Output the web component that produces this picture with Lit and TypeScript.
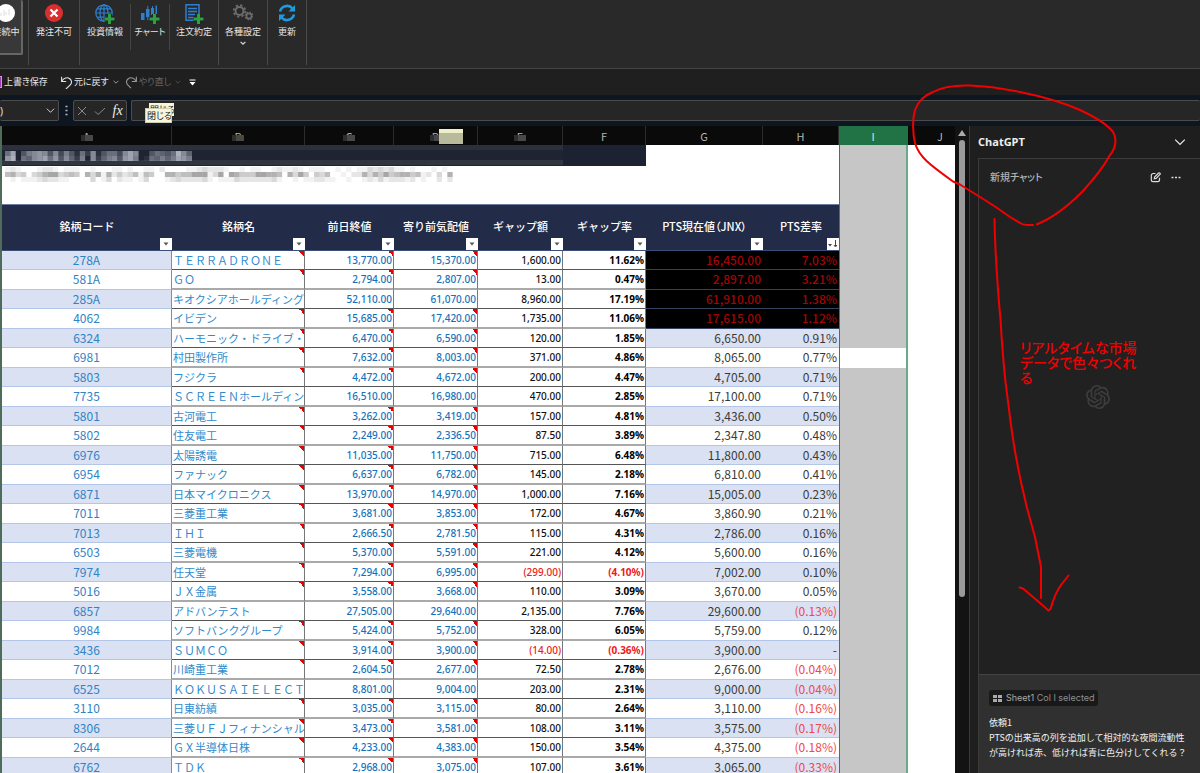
import { LitElement, html, css, svg, nothing } from "lit";
import { customElement } from "lit/decorators.js";
import { classMap } from "lit/directives/class-map.js";

type Row = [string, string, string, string, string, string, string, string];

const ROWS: Row[] = [
  ["278A", "ＴＥＲＲＡＤＲＯＮＥ", "13,770.00", "15,370.00", "1,600.00", "11.62%", "16,450.00", "7.03%"],
  ["581A", "ＧＯ", "2,794.00", "2,807.00", "13.00", "0.47%", "2,897.00", "3.21%"],
  ["285A", "キオクシアホールディング", "52,110.00", "61,070.00", "8,960.00", "17.19%", "61,910.00", "1.38%"],
  ["4062", "イビデン", "15,685.00", "17,420.00", "1,735.00", "11.06%", "17,615.00", "1.12%"],
  ["6324", "ハーモニック・ドライブ・", "6,470.00", "6,590.00", "120.00", "1.85%", "6,650.00", "0.91%"],
  ["6981", "村田製作所", "7,632.00", "8,003.00", "371.00", "4.86%", "8,065.00", "0.77%"],
  ["5803", "フジクラ", "4,472.00", "4,672.00", "200.00", "4.47%", "4,705.00", "0.71%"],
  ["7735", "ＳＣＲＥＥＮホールディン", "16,510.00", "16,980.00", "470.00", "2.85%", "17,100.00", "0.71%"],
  ["5801", "古河電工", "3,262.00", "3,419.00", "157.00", "4.81%", "3,436.00", "0.50%"],
  ["5802", "住友電工", "2,249.00", "2,336.50", "87.50", "3.89%", "2,347.80", "0.48%"],
  ["6976", "太陽誘電", "11,035.00", "11,750.00", "715.00", "6.48%", "11,800.00", "0.43%"],
  ["6954", "ファナック", "6,637.00", "6,782.00", "145.00", "2.18%", "6,810.00", "0.41%"],
  ["6871", "日本マイクロニクス", "13,970.00", "14,970.00", "1,000.00", "7.16%", "15,005.00", "0.23%"],
  ["7011", "三菱重工業", "3,681.00", "3,853.00", "172.00", "4.67%", "3,860.90", "0.21%"],
  ["7013", "ＩＨＩ", "2,666.50", "2,781.50", "115.00", "4.31%", "2,786.00", "0.16%"],
  ["6503", "三菱電機", "5,370.00", "5,591.00", "221.00", "4.12%", "5,600.00", "0.16%"],
  ["7974", "任天堂", "7,294.00", "6,995.00", "(299.00)", "(4.10%)", "7,002.00", "0.10%"],
  ["5016", "ＪＸ金属", "3,558.00", "3,668.00", "110.00", "3.09%", "3,670.00", "0.05%"],
  ["6857", "アドバンテスト", "27,505.00", "29,640.00", "2,135.00", "7.76%", "29,600.00", "(0.13%)"],
  ["9984", "ソフトバンクグループ", "5,424.00", "5,752.00", "328.00", "6.05%", "5,759.00", "0.12%"],
  ["3436", "ＳＵＭＣＯ", "3,914.00", "3,900.00", "(14.00)", "(0.36%)", "3,900.00", "-"],
  ["7012", "川崎重工業", "2,604.50", "2,677.00", "72.50", "2.78%", "2,676.00", "(0.04%)"],
  ["6525", "ＫＯＫＵＳＡＩＥＬＥＣＴ", "8,801.00", "9,004.00", "203.00", "2.31%", "9,000.00", "(0.04%)"],
  ["3110", "日東紡績", "3,035.00", "3,115.00", "80.00", "2.64%", "3,110.00", "(0.16%)"],
  ["8306", "三菱ＵＦＪフィナンシャル", "3,473.00", "3,581.00", "108.00", "3.11%", "3,575.00", "(0.17%)"],
  ["2644", "ＧＸ半導体日株", "4,233.00", "4,383.00", "150.00", "3.54%", "4,375.00", "(0.18%)"],
  ["6762", "ＴＤＫ", "2,968.00", "3,075.00", "107.00", "3.61%", "3,065.00", "(0.33%)"],
];

const HEADS = ["銘柄コード", "銘柄名", "前日終値", "寄り前気配値", "ギャップ額", "ギャップ率", "PTS現在値（JNX）", "PTS差率"];
const LETTERS = ["A", "B", "C", "D", "E", "F", "G", "H", "I", "J"];
const WITHOUT_NOTE = new Set(["285A", "7735", "6857", "6525"]);

/** Mosaic strips: one hex digit of strength per 16-unit block, one string per line. */
const TITLE_MOSAIC = ["6a047898483741628146638a80046546b85", "9b06589a694852708257849a70165757a97"];
const SUB_MOSAIC = [
  "1210001221011100100011010011020000112322210010110012112101110010101132323110100010100",
  "5634034677345406361624235154006645577713707644477665063740435001022636474566451203060",
  "0101112322110000301302110130001232222310111322222231001011221100100121312221201002020",
];

const mosaic = (lines: string[], fill: string, height: number, strength: number) => svg`
  <svg class="mosaic" width=${Math.round((lines[0].length * 16) / 3)} height=${lines.length * height}
    viewBox="0 0 ${lines[0].length * 16} ${lines.length * height}" preserveAspectRatio="none" aria-hidden="true">
    ${lines.map((line, y) => [...line].map((d, x) => svg`<rect x=${x * 16} y=${y * height} width="16" height=${height}
      fill=${fill} fill-opacity=${parseInt(d, 16) * strength}></rect>`))}
  </svg>`;

const plus = svg`<path d="M14.500 10v10M9.500 15h10" stroke="#1f1f1f" stroke-width="5"/><path d="M14.500 10v10M9.500 15h10" stroke="#2ea043" stroke-width="3.200"/>`;

const ICONS = {
  link: svg`<circle cx="10" cy="9" r="9" fill="#fff"/><path d="M5 9v3M8 6v6M10 8v3M13 5v6" stroke="#ddd"/>`,
  stop: svg`<circle cx="10" cy="9" r="9" fill="#d9302f"/><path d="M6.500 5.500l7 7M13.500 5.500l-7 7" stroke="#fff" stroke-width="2.200"/>`,
  globe: svg`<g fill="none" stroke="#2f7fd0" stroke-width="1.200"><circle cx="9" cy="9" r="8.200"/><ellipse cx="9" cy="9" rx="4" ry="8.200"/><path d="M.8 9h16.400M9 .8v16.400M2.200 4.800h13.600M2.200 13.200h13.600"/></g>${plus}`,
  chart: svg`<g fill="#2f7fd0"><rect x="1" y="9" width="3.500" height="7"/><path d="M6 5h3.500v8H6zM7.300 2h1v14h-1zM11 4h3v7h-3z"/><path d="M12 2h1v12h-1zM15.500 1.500H17v9h-1.500z"/></g>${plus}`,
  order: svg`<path d="M2 .8h13v15.500H2z" fill="none" stroke="#2f7fd0" stroke-width="1.500"/><path d="M4 4.500h9M4 7.500h9M4 10.500h7M4 13.500h6" stroke="#2f7fd0" stroke-width="1.500"/>${plus}`,
  gears: svg`<g fill="none" stroke="#6c6c6c"><circle cx="6.500" cy="7" r="4" stroke-width="2"/><circle cx="6.500" cy="7" r="5.800" stroke-width="1.800" stroke-dasharray="2.280 2.280"/><circle cx="16" cy="12" r="2.600" stroke-width="1.600"/><circle cx="16" cy="12" r="3.900" stroke-width="1.200" stroke-dasharray="1.530 1.530"/></g>`,
  refresh: svg`<g fill="none" stroke="#1e9be0" stroke-width="2.600"><path d="M3 7.500a7.200 7.200 0 0 1 12.500-3"/><path d="M17 10.500a7.200 7.200 0 0 1-12.500 3"/></g><path d="M18 1v6.500h-6.500zM2 17v-6.500h6.500z" fill="#1e9be0"/>`,
};

const OPENAI =
  "M22.2819 9.8211a5.9847 5.9847 0 0 0-.5157-4.9108 6.0462 6.0462 0 0 0-6.5098-2.9A6.0651 6.0651 0 0 0 4.9807 4.1818a5.9847 5.9847 0 0 0-3.9977 2.9 6.0462 6.0462 0 0 0 .7427 7.0966 5.98 5.98 0 0 0 .511 4.9107 6.051 6.051 0 0 0 6.5146 2.9001A5.9847 5.9847 0 0 0 13.2599 24a6.0557 6.0557 0 0 0 5.7718-4.2058 5.9894 5.9894 0 0 0 3.9977-2.9001 6.0557 6.0557 0 0 0-.7475-7.0729zm-9.022 12.6081a4.4755 4.4755 0 0 1-2.8764-1.0408l.1419-.0804 4.7783-2.7582a.7948.7948 0 0 0 .3927-.6813v-6.7369l2.02 1.1686a.071.071 0 0 1 .038.052v5.5826a4.504 4.504 0 0 1-4.4945 4.4944zm-9.6607-4.1254a4.4708 4.4708 0 0 1-.5346-3.0137l.142.0852 4.783 2.7582a.7712.7712 0 0 0 .7806 0l5.8428-3.3685v2.3324a.0804.0804 0 0 1-.0332.0615L9.74 19.9502a4.4992 4.4992 0 0 1-6.1408-1.6464zM2.3408 7.8956a4.485 4.485 0 0 1 2.3655-1.9728V11.6a.7664.7664 0 0 0 .3879.6765l5.8144 3.3543-2.0201 1.1685a.0757.0757 0 0 1-.071 0l-4.8303-2.7865A4.504 4.504 0 0 1 2.3408 7.872zm16.5963 3.8558L13.1038 8.364 15.1192 7.2a.0757.0757 0 0 1 .071 0l4.8303 2.7913a4.4944 4.4944 0 0 1-.6765 8.1042v-5.6772a.79.79 0 0 0-.407-.667zm2.0107-3.0231l-.142-.0852-4.7735-2.7818a.7759.7759 0 0 0-.7854 0L9.409 9.2297V6.8974a.0662.0662 0 0 1 .0284-.0615l4.8303-2.7866a4.4992 4.4992 0 0 1 6.6802 4.66zM8.3065 12.863l-2.02-1.1638a.0804.0804 0 0 1-.038-.0567V6.0742a4.4992 4.4992 0 0 1 7.3757-3.4537l-.142.0805L8.704 5.459a.7948.7948 0 0 0-.3927.6813zm1.0976-2.3654l2.602-1.4998 2.6069 1.4998v2.9994l-2.5974 1.4997-2.6067-1.4997Z";

const chevron = (size: number) => html`<svg class="line" width=${size} height=${size} viewBox="0 0 10 10" aria-hidden="true"><path d="M1 3l4 4 4-4"/></svg>`;

@customElement("ribbon-bar")
class RibbonBar extends LitElement {
  static styles = css`
    :host { display: block; background: #292929; color: #e6e6e6; border-bottom: 1px solid #444; }
    .groups { display: flex; height: 68px; overflow: hidden; }
    .group { display: flex; height: 65px; box-sizing: border-box; border-right: 1px solid #4a4a4a; }
    .tool {
      display: flex; flex-direction: column; align-items: center; gap: 2px; box-sizing: border-box;
      width: 50px; height: 55px; padding: 4px 0 0; border: 0; background: none; color: inherit;
      font: 9px/12px "Noto Sans CJK JP", sans-serif; font-feature-settings: "palt"; white-space: nowrap;
    }
    .narrow { width: 38px; }
    .mid { width: 48px; }
    .on { width: 32px; margin: 0 5px 0 -9px; border: 2px solid #666; border-top: 0; border-left: 0; background: #383838; border-radius: 2px; align-items: center; }
    .split { width: 1px; height: 46px; margin-top: 4px; background: #444; }
    .line { fill: none; stroke: #ddd; stroke-width: 2; }
  `;
  private tool(icon: keyof typeof ICONS, label: string, cls = "", menu = false) {
    return html`<button class="tool ${cls}" type="button">
      <svg width="20" height="20" viewBox="0 0 20 20" aria-hidden="true">${ICONS[icon]}</svg>
      <span>${label}</span>${menu ? chevron(6) : nothing}
    </button>`;
  }
  render() {
    return html`<div class="groups">
      <div class="group">${this.tool("link", "接続中", "on")}</div>
      <div class="group">${this.tool("stop", "発注不可")}</div>
      <div class="group">
        ${this.tool("globe", "投資情報")}<span class="split"></span>
        ${this.tool("chart", "チャート", "narrow")}<span class="split"></span>
        ${this.tool("order", "注文約定", "mid")}
      </div>
      <div class="group">${this.tool("gears", "各種設定", "mid", true)}</div>
      <div class="group">${this.tool("refresh", "更新", "narrow")}</div>
    </div>`;
  }
}

@customElement("command-rows")
class CommandRows extends LitElement {
  static styles = css`
    :host { display: block; font: 9px/12px "Noto Sans CJK JP", sans-serif; color: #e6e6e6; }
    button { display: flex; align-items: center; gap: 2px; padding: 0; border: 0; background: none; color: inherit; font: inherit; font-feature-settings: "palt"; }
    .line { fill: none; stroke: currentColor; stroke-width: 1; }
    .quick { display: flex; align-items: center; height: 26px; background: #1f1f1f; }
    .disk { width: 1px; height: 10px; border: 1px solid #e08be6; border-left: 0; background: #a33bb0; }
    .undo { margin-left: 12px; gap: 1px; }
    .menu { margin-left: 4px; }
    .redo { margin-left: 6px; gap: 1px; }
    .off { color: #666; }
    .more { margin-left: 8px; }
    .formula { display: flex; align-items: center; gap: 4px; padding: 5px 0; background: #0e1721; }
    .box { display: flex; align-items: center; box-sizing: border-box; height: 21px; border: 1px solid #4c4c4c; border-radius: 2px; background: #262626; }
    .name { width: 59px; border-left: 0; padding-right: 3px; }
    .field { min-width: 0; flex: 1; border: 0; padding: 0; outline: 0; background: none; color: inherit; font: 10px "Noto Sans", sans-serif; }
    .dots { width: 6px; display: grid; justify-content: center; color: #aaa; }
    .fx { width: 54px; justify-content: space-around; color: #8a8a8a; }
    .fxlabel { font: italic 14px/16px "Liberation Serif", serif; color: #eee; }
    .entry { position: relative; flex: 1; border-right: 0; padding-left: 4px; }
    .tip { position: absolute; box-sizing: border-box; width: 25px; height: 13px; padding-left: 1px; background: #f7f5dc; color: #222; font-size: 9px; line-height: 13px; font-feature-settings: "palt"; white-space: nowrap; }
    .back { left: 17px; top: 2px; }
    .front { left: 14px; top: 8px; outline: 1px solid #cfcdb4; }
  `;
  render() {
    return html`
      <div class="quick">
        <button type="button"><span class="disk"></span><span>上書き保存</span></button>
        <button type="button" class="undo">
          <svg class="line" width="13" height="13" viewBox="0 0 12 12" aria-hidden="true"><path d="M1.500 .8v4.200h4.200M1.500 5C3.500 1.500 7 .9 9 2.500s2.200 3.900.5 5.600L5.500 12"/></svg>
          <span>元に戻す</span>
        </button>
        <button type="button" class="menu" aria-label="元に戻すの一覧">${chevron(6)}</button>
        <button type="button" class="redo off" disabled>
          <svg class="line" width="13" height="13" viewBox="0 0 12 12" aria-hidden="true"><path stroke="#999" d="M10.500 .8v4.200H6.300M10.500 5C8.500 1.500 5 .9 3 2.500s-2.200 3.900-.5 5.600l3 3"/></svg>
          <span>やり直し</span>
        </button>
        <button type="button" class="menu off" aria-label="やり直しの一覧">${chevron(6)}</button>
        <button type="button" class="more" aria-label="カスタマイズ">
          <svg width="7" height="7" viewBox="0 0 7 7" aria-hidden="true"><path d="M.5 1h6" stroke="#fff"/><path d="M.5 3h6L3.500 6.500z" fill="#fff"/></svg>
        </button>
      </div>
      <div class="formula">
        <div class="box name"><input class="field" aria-label="名前ボックス" .value=${")"} />${chevron(9)}</div>
        <div class="dots"><svg width="3" height="11" viewBox="0 0 3 11" aria-hidden="true"><path d="M.5 1.500h2M.5 5.500h2M.5 9.500h2" stroke="#bbb" stroke-width="1.500"/></svg></div>
        <div class="box fx">
          <svg class="line" width="10" height="10" viewBox="0 0 10 10" aria-hidden="true"><path d="M1 1l8 8M9 1l-8 8"/></svg>
          <svg class="line" width="12" height="10" viewBox="0 0 12 10" aria-hidden="true"><path d="M1 5.500l3 3L11 2"/></svg>
          <span class="fxlabel">fx</span>
        </div>
        <div class="box entry">
          <input class="field" aria-label="数式バー" />
          <span class="tip back">閉じる</span><span class="tip front">閉じる</span>
        </div>
      </div>`;
  }
}

@customElement("sheet-grid")
class SheetGrid extends LitElement {
  static styles = css`
    :host { display: block; box-sizing: border-box; overflow: hidden; background: #fff; border-left: 2px solid #4f6b5a; font-family: "Noto Sans CJK JP", sans-serif; }
    table { width: calc(100% + 18px); table-layout: fixed; border-collapse: separate; border-spacing: 0; }
    th, td { padding: 0; overflow: hidden; white-space: nowrap; box-sizing: border-box; }
    .ca { width: 170px; } .cb { width: 133px; } .cc { width: 89px; } .cd { width: 84px; } .ce { width: 85px; }
    .cf { width: 83px; } .cg { width: 117px; } .ch { width: 76px; } .ci { width: 69px; }
    .letter { position: relative; height: 19px; background: #0a0a0a; color: #b4b4b4; border-right: 1px solid #2c2c2c; font-size: 11px; font-weight: 400; line-height: 18px; }
    .masked::after { content: ""; position: absolute; left: calc(50% - 6px); bottom: 4px; width: 12px; height: 6px; background: linear-gradient(90deg, #2e2e2e 4px, #484848 4px); }
    .remnant::before { content: ""; position: absolute; z-index: 1; left: 45px; top: 3px; width: 24px; height: 15px; background: linear-gradient(#efeecb 4px, #b9b99c 4px); }
    .letter.sel { background: #217346; color: #d5e8dc; border-right-color: #217346; }
    .title { height: 21px; background: linear-gradient(#2b303c 5px, #1e2432 5px 15px, #30353f 15px 20px, #1c2238 20px) left / calc(100% - 83px) 100% no-repeat #1c2231; }
    .title .mosaic { display: block; margin-left: 3px; height: 10px; }
    .sub { height: 38px; vertical-align: top; }
    .sub .mosaic { display: block; margin: 1px 0 0 3px; height: 15px; }
    .head { height: 47px; background: #222b47; color: #fff; border-top: 1px solid #6c7ba0; border-bottom: 1px solid #3c4d78; font-size: 11px; font-weight: 500; }
    .cell { display: grid; height: 45px; }
    .cell > * { grid-area: 1 / 1; }
    .cell span { place-self: start center; line-height: 42px; }
    .snug { font-feature-settings: "palt"; }
    .filter { place-self: end; width: 12px; height: 12px; padding: 0; border: 0; background: #fff; display: grid; place-content: center; }
    .odd { height: 19px; }
    .even { height: 20px; }
    .odd td, .even td { line-height: 18px; vertical-align: top; }
    .code, .pts { font-size: 12px; border-bottom: 1px solid #b4c6e7; }
    .code { color: #2f83c6; text-align: center; border-right: 1px solid #8c8c8c; }
    .odd .code, .odd .pts { background: #d9e1f2; }
    .name { color: #2f8acb; font-size: 11px; font-weight: 400; padding-left: 1px; }
    .num { font-family: "Noto Sans", "Noto Sans CJK JP", sans-serif; font-size: 10px; text-align: right; padding-right: 1px; color: #111; font-weight: 500; }
    .price { color: #1272bd; }
    .rate { font-weight: 700; color: #000; }
    .name, .num { border-right: 1px solid #777; border-bottom: 1px solid #555; }
    .even .name, .even .num { border-bottom: 2px solid #a9a9a9; }
    .noted { background: linear-gradient(to bottom left, #e60000 50%, transparent 50%) right top / 5px 5px no-repeat; }
    .num.neg { color: #f01818; }
    .pts { text-align: right; padding-right: 2px; color: #3a3a3a; }
    .pts.neg { color: #f04848; }
    .odd .pts.hot, .even .pts.hot { background: #000; color: #a00606; border-bottom-color: #34435f; font-weight: 500; }
    .col { background: #c6c6c6; border-left: 1px solid #2e8055; border-right: 2px solid #6da88a; }
    .active { background: #fff; }
  `;
  render() {
    const rest = (active = false) => html`<td class=${classMap({ col: true, active })}></td><td></td>`;
    return html`<table>
      <colgroup>${["ca", "cb", "cc", "cd", "ce", "cf", "cg", "ch", "ci", "cj"].map((c) => html`<col class=${c} />`)}</colgroup>
      <thead><tr>${LETTERS.map((l, i) => html`<th class=${classMap({ letter: true, masked: i < 5, remnant: i === 3, sel: i === 8 })}>${l}</th>`)}</tr></thead>
      <tbody>
        <tr><td class="title" colspan="6">${mosaic(TITLE_MOSAIC, "#d5dae4", 5, 0.07)}</td><td></td><td></td>${rest()}</tr>
        <tr><td class="sub" colspan="8">${mosaic(SUB_MOSAIC, "#555", 5, 0.075)}</td>${rest()}</tr>
        <tr>${HEADS.map((h, i) => html`<th class="head"><div class="cell"><span class=${classMap({ snug: i > 5 })}>${h}</span>
          <button class="filter" type="button" aria-label="フィルター">
            ${i === 7
              ? html`<svg width="10" height="8" viewBox="0 0 10 8" aria-hidden="true"><path d="M0 4h4L2 6.500z" fill="#444"/><path d="M7.500 0v6M6 5l1.500 2L9 5" stroke="#444" fill="none"/></svg>`
              : html`<svg width="6" height="4" viewBox="0 0 6 4" aria-hidden="true"><path d="M.5 .5h5L3 3.500z" fill="#555"/></svg>`}
          </button></div></th>`)}${rest()}</tr>
        ${ROWS.map((r, i) => {
          const noted = !WITHOUT_NOTE.has(r[0]);
          const neg = (v: string) => v.startsWith("(");
          return html`<tr class=${i % 2 ? "even" : "odd"}>
            <td class="code">${r[0]}</td>
            <td class=${classMap({ name: true, noted })}>${r[1]}</td>
            <td class=${classMap({ num: true, price: true, noted })}>${r[2]}</td>
            <td class=${classMap({ num: true, price: true, noted })}>${r[3]}</td>
            <td class=${classMap({ num: true, neg: neg(r[4]) })}>${r[4]}</td>
            <td class=${classMap({ num: true, rate: true, neg: neg(r[5]) })}>${r[5]}</td>
            <td class=${classMap({ pts: true, hot: i < 4 })}>${r[6]}</td>
            <td class=${classMap({ pts: true, hot: i < 4, neg: neg(r[7]) })}>${r[7]}</td>
            ${rest(i === 5)}
          </tr>`;
        })}
      </tbody>
    </table>`;
  }
}

@customElement("chat-pane")
class ChatPane extends LitElement {
  static styles = css`
    :host { display: flex; flex-direction: column; box-sizing: border-box; min-height: 0; background: #1e1e1e; border-left: 1px solid #343b42; padding-left: 8px; color: #eee; font-family: "Noto Sans CJK JP", sans-serif; }
    button { display: grid; padding: 0; border: 0; background: none; color: inherit; }
    .top { display: flex; align-items: center; justify-content: space-between; height: 32px; padding-right: 14px; }
    h1 { margin: 0; font: 700 11px/16px "Open Sans", sans-serif; }
    .line { fill: none; stroke: currentColor; stroke-width: 1; }
    .frame { flex: 1; min-height: 0; display: flex; flex-direction: column; border: 1px solid #3b3b3b; border-width: 1px 0 0 1px; background: #212121; }
    .bar { display: flex; align-items: center; gap: 10px; height: 36px; padding: 0 19px 0 11px; color: #ddd; }
    h2 { flex: 1; margin: 0; font-size: 10px; font-weight: 500; line-height: 16px; color: #b4b4b4; font-feature-settings: "palt"; }
    .body { flex: 1; display: grid; justify-content: center; padding: 190px 0 0 17px; align-content: start; }
    .logo { fill: #3e3e3e; }
    .composer { display: flex; flex-direction: column; align-items: flex-start; gap: 9px; background: #303030; border-top: 1px solid #444; padding: 15px 0 10px 10px; }
    .chip { display: inline-flex; align-items: center; gap: 4px; height: 16px; padding: 0 3px 0 4px; background: #191919; border-radius: 3px; font: 9px/16px Inter, sans-serif; color: #8f8f8f; }
    .chip strong { font-weight: 400; color: #aaa; }
    textarea { display: block; box-sizing: border-box; width: 100%; height: 48px; padding: 0; border: 0; outline: 0; resize: none; overflow: hidden; background: none; color: #f2f2f2; font: 9px/15px "Noto Sans CJK JP", sans-serif; white-space: pre; }
  `;
  render() {
    return html`
      <div class="top"><h1>ChatGPT</h1><button type="button" aria-label="閉じる">${chevron(12)}</button></div>
      <div class="frame">
        <div class="bar">
          <h2>新規チャット</h2>
          <button type="button" aria-label="新規">
            <svg class="line" width="11" height="11" viewBox="0 0 11 11" aria-hidden="true"><path stroke-width="1.200" d="M5.500 1.500H3.200A1.900 1.900 0 0 0 1.300 3.400v4.400a1.900 1.900 0 0 0 1.900 1.900h4.400a1.900 1.900 0 0 0 1.900-1.900V5.800M4.300 6.800l.3-1.800L8.600 1a1 1 0 0 1 1.400 1.400L6.100 6.400z"/></svg>
          </button>
          <button type="button" aria-label="メニュー"><svg width="10" height="3" viewBox="0 0 10 3" aria-hidden="true"><path d="M.5 1.500h2M4 1.500h2M7.500 1.500h2" stroke="#ddd" stroke-width="1.600"/></svg></button>
        </div>
        <div class="body"><svg class="logo" width="24" height="24" viewBox="0 0 24 24" role="img" aria-label="OpenAI"><path d=${OPENAI}></path></svg></div>
        <div class="composer">
          <span class="chip"><svg width="9" height="7" viewBox="0 0 9 7" aria-hidden="true"><path d="M0 0h4v3H0zM5 0h4v3H5zM0 4h4v3H0zM5 4h4v3H5z" fill="#aaa"/></svg>
            <span><strong>Sheet1</strong> Col I selected</span></span>
          <textarea aria-label="メッセージ" .value=${"依頼1\nPTSの出来高の列を追加して相対的な夜間流動性\nが高ければ赤、低ければ青に色分けしてくれる？"}></textarea>
        </div>
      </div>`;
  }
}

@customElement("app-root")
class AppRoot extends LitElement {
  static styles = css`
    :host { position: relative; display: flex; flex-direction: column; height: 100vh; overflow: hidden; background: #0e1721; }
    .work { flex: 1; min-height: 0; display: grid; grid-template-columns: minmax(0, 1fr) 14px 231px; }
    .scroll { display: flex; flex-direction: column; align-items: center; gap: 4px; padding-top: 4px; background: #131313; }
    .thumb { width: 6px; height: 71%; border-radius: 3px; background: #9a9a9a; }
    .ink { position: absolute; right: 0; top: 0; pointer-events: none; fill: none; stroke: #f00000; stroke-width: 2; stroke-linecap: round; stroke-linejoin: round; }
    .memo { position: absolute; right: 60px; top: 340px; width: 120px; margin: 0; color: #f00000; font: 500 14px/15px "Noto Sans CJK JP", sans-serif; font-feature-settings: "palt"; white-space: pre; }
  `;
  render() {
    return html`
      <ribbon-bar></ribbon-bar>
      <command-rows></command-rows>
      <div class="work">
        <sheet-grid></sheet-grid>
        <div class="scroll">
          <svg width="8" height="6" viewBox="0 0 8 6" aria-hidden="true"><path d="M4 0l4 6H0z" fill="#aaa"/></svg>
          <div class="thumb"></div>
        </div>
        <chat-pane></chat-pane>
      </div>
      <svg class="ink" width="300" height="640" viewBox="900 0 300 640" aria-hidden="true">
        <path d="M1037 224.300C1055 217 1070 204 1082 192C1095 178 1104 166 1110 155C1116 148 1117 138 1113 132C1107 124 1095 117 1080 110C1062 102 1040 96 1020 92C1000 88 985 86 970 85.500C955 85 942 87 933 92C925 95 918 102 915 110C912 120 913 135 915 143C919 157 930 165 953 181.500L960 184.500L980 197L995 206.500L1010 217L1021 223.500Q1024 225.500 1033 225"/>
        <path d="M994.500 219C995 250 997 280 1000.500 320C1002 345 1004 368 1005.500 382L1011 425C1014 448 1020 480 1027 508L1035 537L1041 567V598"/>
        <path d="M1019.500 587.500L1023 588.500L1040 603L1048.500 610.500L1050.500 609C1053 600 1056 592 1061 585L1068.500 575.500"/>
      </svg>
      <p class="memo">リアルタイムな市場
データで色々つくれ
る</p>`;
  }
}
